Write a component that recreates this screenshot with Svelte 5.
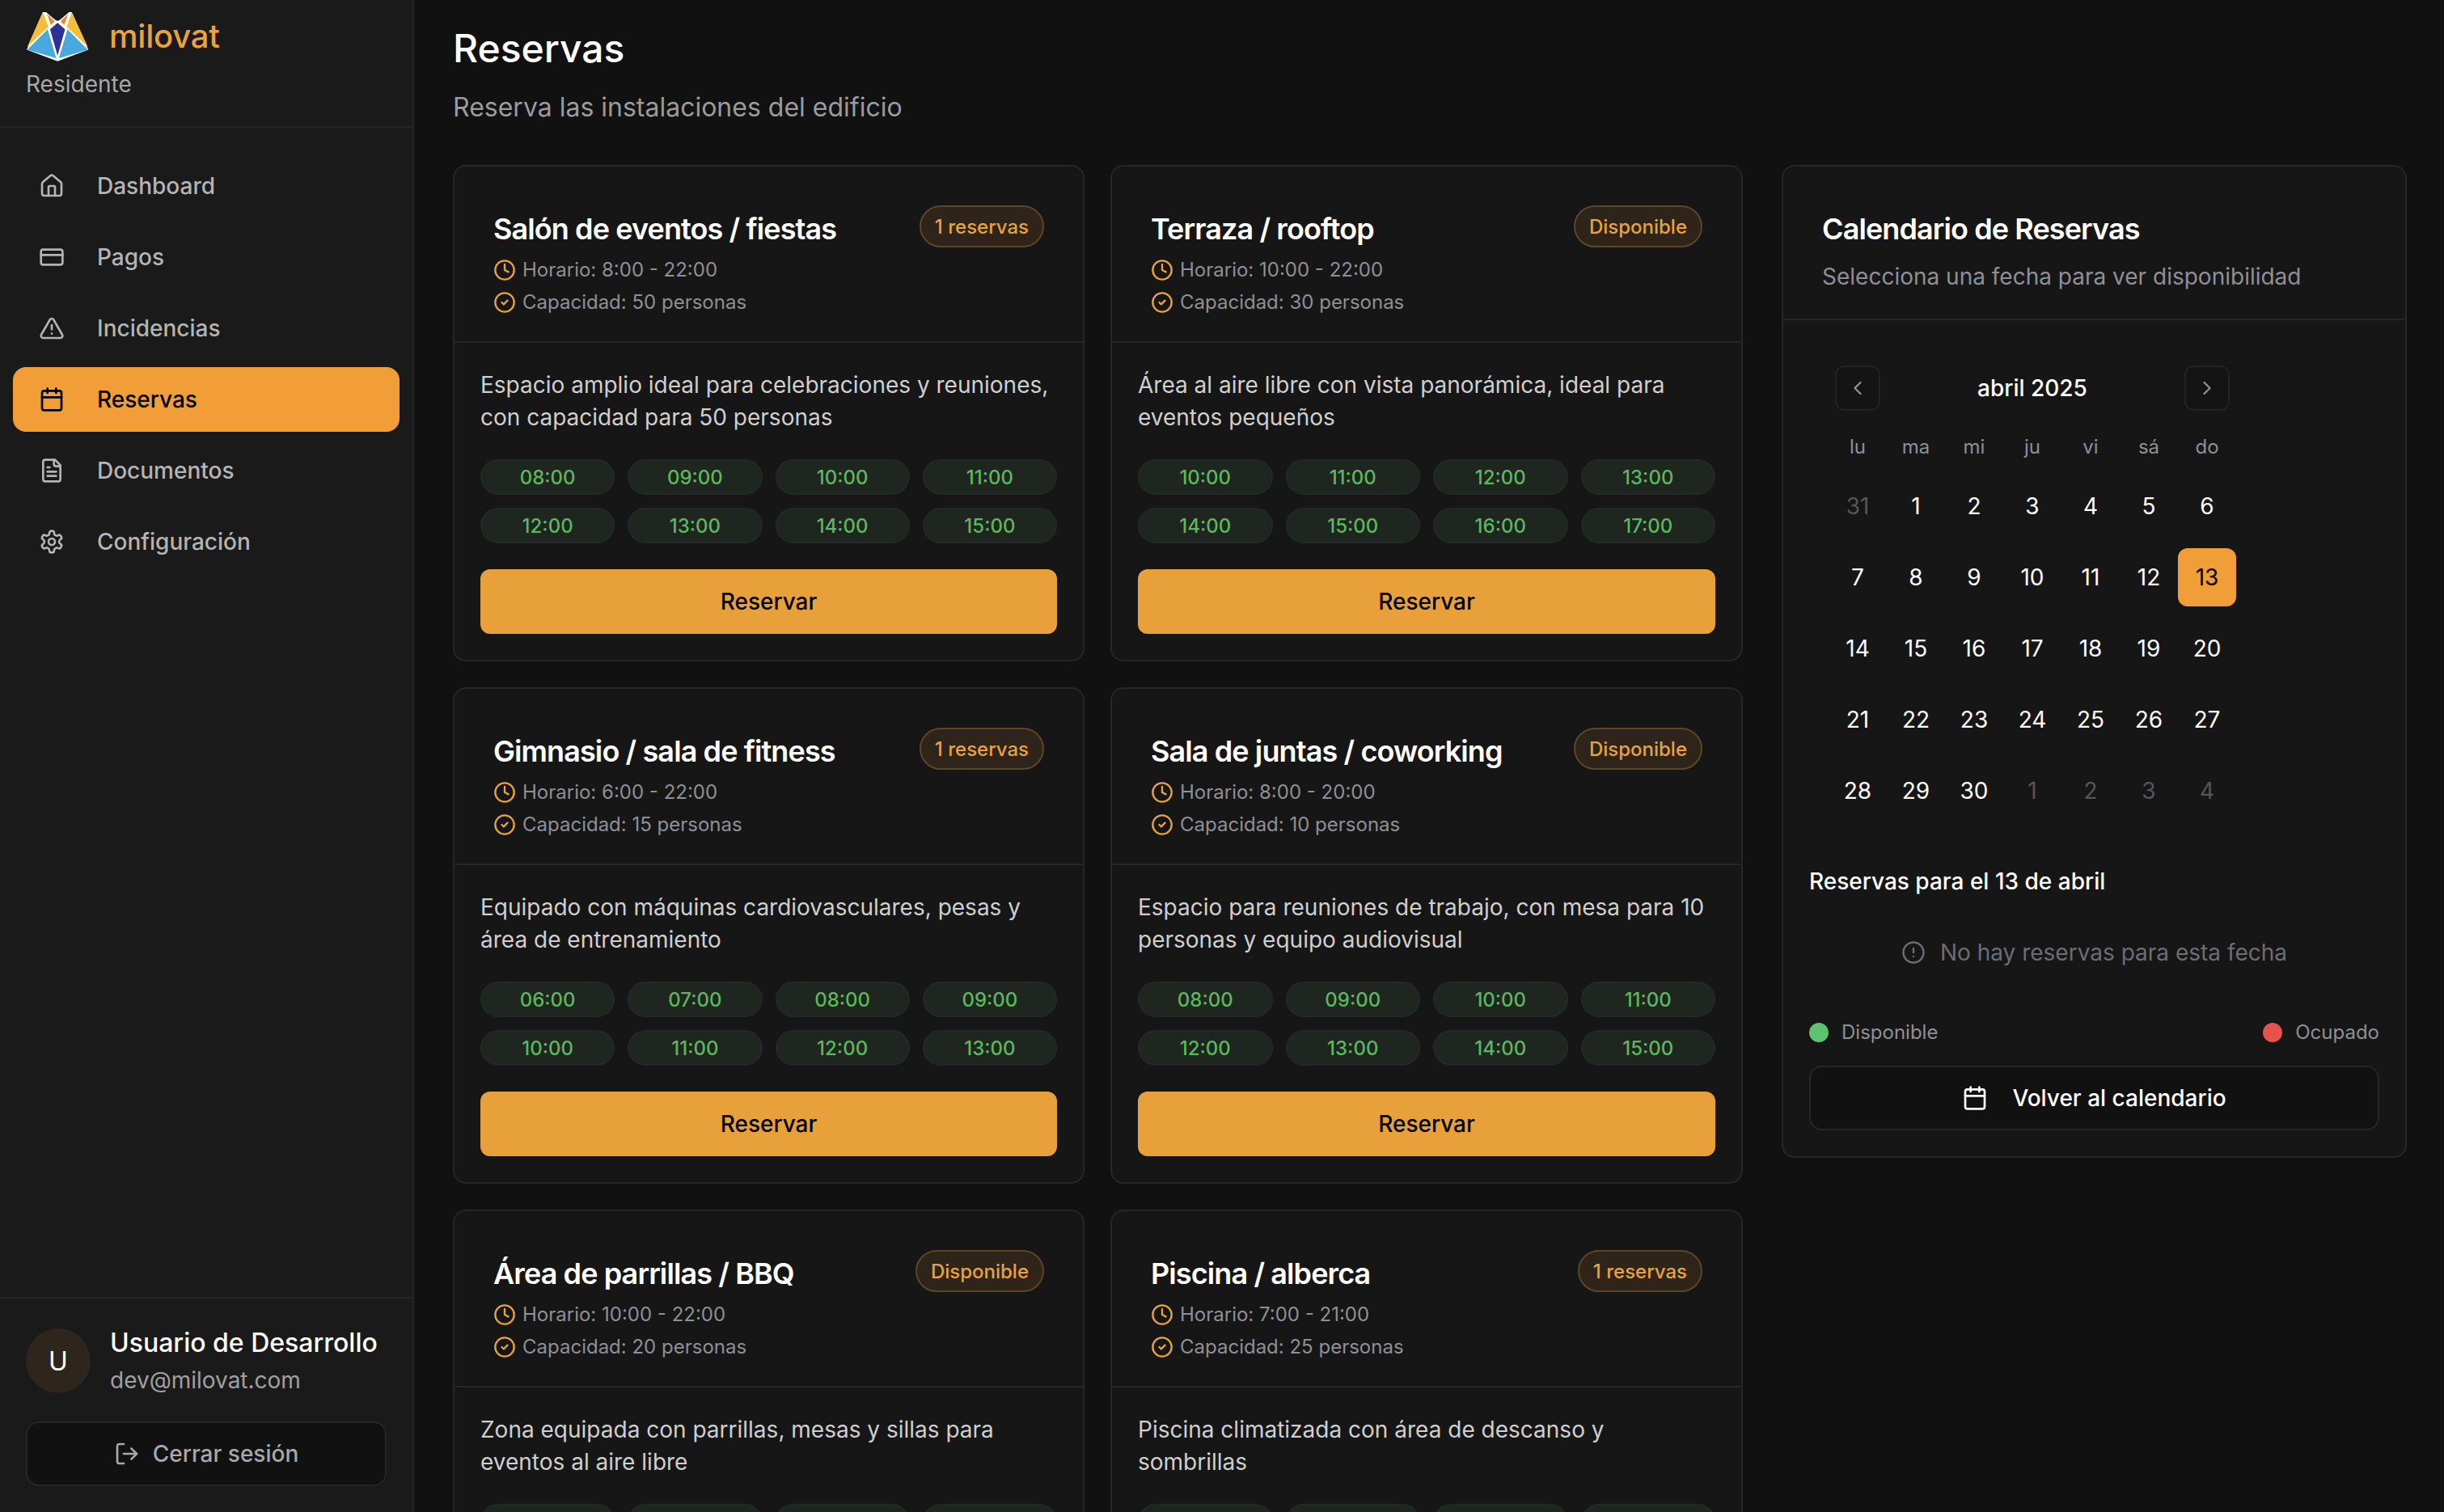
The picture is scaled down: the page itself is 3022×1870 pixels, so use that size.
<script lang="ts">
	const nav = [
		{ label: 'Dashboard', icon: 'home' },
		{ label: 'Pagos', icon: 'card' },
		{ label: 'Incidencias', icon: 'alert' },
		{ label: 'Reservas', icon: 'calendar', active: true },
		{ label: 'Documentos', icon: 'file' },
		{ label: 'Configuración', icon: 'gear' }
	];

	const hours = (from: number) =>
		Array.from({ length: 8 }, (_, i) => String(from + i).padStart(2, '0') + ':00');

	const spaces = [
		{
			name: 'Salón de eventos / fiestas',
			badge: '1 reservas',
			time: '8:00 - 22:00',
			cap: 50,
			desc: 'Espacio amplio ideal para celebraciones y reuniones, con capacidad para 50 personas',
			slots: hours(8)
		},
		{
			name: 'Terraza / rooftop',
			badge: 'Disponible',
			time: '10:00 - 22:00',
			cap: 30,
			desc: 'Área al aire libre con vista panorámica, ideal para eventos pequeños',
			slots: hours(10)
		},
		{
			name: 'Gimnasio / sala de fitness',
			badge: '1 reservas',
			time: '6:00 - 22:00',
			cap: 15,
			desc: 'Equipado con máquinas cardiovasculares, pesas y área de entrenamiento',
			slots: hours(6)
		},
		{
			name: 'Sala de juntas / coworking',
			badge: 'Disponible',
			time: '8:00 - 20:00',
			cap: 10,
			desc: 'Espacio para reuniones de trabajo, con mesa para 10 personas y equipo audiovisual',
			slots: hours(8)
		},
		{
			name: 'Área de parrillas / BBQ',
			badge: 'Disponible',
			time: '10:00 - 22:00',
			cap: 20,
			desc: 'Zona equipada con parrillas, mesas y sillas para eventos al aire libre',
			slots: hours(10)
		},
		{
			name: 'Piscina / alberca',
			badge: '1 reservas',
			time: '7:00 - 21:00',
			cap: 25,
			desc: 'Piscina climatizada con área de descanso y sombrillas',
			slots: hours(7)
		}
	];

	const weekdays = ['lu', 'ma', 'mi', 'ju', 'vi', 'sá', 'do'];
	const days = [
		{ n: 31, out: true },
		...Array.from({ length: 30 }, (_, i) => ({ n: i + 1, out: false })),
		...[1, 2, 3, 4].map((n) => ({ n, out: true }))
	];
</script>

{#snippet icon(name: string, size: number)}
	<svg
		width={size}
		height={size}
		viewBox="0 0 24 24"
		fill="none"
		stroke="currentColor"
		stroke-width="2"
		stroke-linecap="round"
		stroke-linejoin="round"
		aria-hidden="true"
	>
		{#if name === 'home'}
			<path d="M15 21v-8a1 1 0 0 0-1-1h-4a1 1 0 0 0-1 1v8" />
			<path d="M3 10a2 2 0 0 1 .709-1.528l7-5.999a2 2 0 0 1 2.582 0l7 5.999A2 2 0 0 1 21 10v9a2 2 0 0 1-2 2H5a2 2 0 0 1-2-2z" />
		{:else if name === 'card'}
			<rect x="2" y="5" width="20" height="14" rx="2" />
			<line x1="2" y1="10" x2="22" y2="10" />
		{:else if name === 'alert'}
			<path d="m21.73 18-8-14a2 2 0 0 0-3.48 0l-8 14A2 2 0 0 0 4 21h16a2 2 0 0 0 1.73-3" />
			<path d="M12 9v4" />
			<path d="M12 17h.01" />
		{:else if name === 'calendar'}
			<path d="M8 2v4" />
			<path d="M16 2v4" />
			<rect x="3" y="4" width="18" height="18" rx="2" />
			<path d="M3 10h18" />
		{:else if name === 'file'}
			<path d="M15 2H6a2 2 0 0 0-2 2v16a2 2 0 0 0 2 2h12a2 2 0 0 0 2-2V7Z" />
			<path d="M14 2v4a2 2 0 0 0 2 2h4" />
			<path d="M10 9H8" />
			<path d="M16 13H8" />
			<path d="M16 17H8" />
		{:else if name === 'gear'}
			<path d="M12.22 2h-.44a2 2 0 0 0-2 2v.18a2 2 0 0 1-1 1.73l-.43.25a2 2 0 0 1-2 0l-.15-.08a2 2 0 0 0-2.73.73l-.22.38a2 2 0 0 0 .73 2.73l.15.1a2 2 0 0 1 1 1.72v.51a2 2 0 0 1-1 1.74l-.15.09a2 2 0 0 0-.73 2.73l.22.38a2 2 0 0 0 2.73.73l.15-.08a2 2 0 0 1 2 0l.43.25a2 2 0 0 1 1 1.73V20a2 2 0 0 0 2 2h.44a2 2 0 0 0 2-2v-.18a2 2 0 0 1 1-1.73l.43-.25a2 2 0 0 1 2 0l.15.08a2 2 0 0 0 2.73-.73l.22-.39a2 2 0 0 0-.73-2.73l-.15-.08a2 2 0 0 1-1-1.74v-.5a2 2 0 0 1 1-1.74l.15-.09a2 2 0 0 0 .73-2.73l-.22-.38a2 2 0 0 0-2.73-.73l-.15.08a2 2 0 0 1-2 0l-.43-.25a2 2 0 0 1-1-1.73V4a2 2 0 0 0-2-2z" />
			<circle cx="12" cy="12" r="3" />
		{:else if name === 'logout'}
			<path d="M9 21H5a2 2 0 0 1-2-2V5a2 2 0 0 1 2-2h4" />
			<polyline points="16 17 21 12 16 7" />
			<line x1="21" y1="12" x2="9" y2="12" />
		{:else if name === 'clock'}
			<circle cx="12" cy="12" r="10" />
			<polyline points="12 6 12 12 16 14" />
		{:else if name === 'check'}
			<circle cx="12" cy="12" r="10" />
			<path d="m9 12 2 2 4-4" />
		{:else if name === 'info'}
			<circle cx="12" cy="12" r="10" />
			<line x1="12" y1="8" x2="12" y2="12" />
			<line x1="12" y1="16" x2="12.01" y2="16" />
		{:else if name === 'left'}
			<path d="m15 18-6-6 6-6" />
		{:else if name === 'right'}
			<path d="m9 18 6-6-6-6" />
		{/if}
	</svg>
{/snippet}

<div class="app">
	<aside class="sidebar">
		<div class="brand">
			<div class="brand-row">
				<svg class="logo" viewBox="100 42 232 184" width="77" height="61" aria-hidden="true">
					<polygon fill="#fff" points="160,42 172,42 205,70 215,75 225,70 258,42 268,42 330,182 215,225 100,182" />
					<polygon fill="#f6bd3c" points="160,42 181,96 102,172" />
					<polygon fill="#f6bd3c" points="268,42 249,96 328,172" />
					<polygon fill="#e98a2e" points="175,48 204,76 190,90" />
					<polygon fill="#e98a2e" points="255,48 226,76 240,90" />
					<polygon fill="#49a9dd" points="178,106 210,214 102,182" />
					<polygon fill="#49a9dd" points="252,106 220,214 328,182" />
					<polygon fill="#2e3192" points="215,82 243,106 215,204 187,106" />
				</svg>
				<span class="brand-name">milovat</span>
			</div>
			<p class="role">Residente</p>
		</div>

		<nav class="nav">
			{#each nav as item}
				<div class="nav-item" class:active={item.active}>
					{@render icon(item.icon, 32)}
					<span>{item.label}</span>
				</div>
			{/each}
		</nav>

		<div class="user-box">
			<div class="user">
				<div class="avatar">U</div>
				<div>
					<p class="user-name">Usuario de Desarrollo</p>
					<p class="user-mail">dev@milovat.com</p>
				</div>
			</div>
			<button class="logout">
				{@render icon('logout', 32)}
				<span>Cerrar sesión</span>
			</button>
		</div>
	</aside>

	<main class="main">
		<h1>Reservas</h1>
		<p class="subtitle">Reserva las instalaciones del edificio</p>

		<div class="layout">
			<div class="spaces">
				{#each spaces as s}
					<section class="card">
						<header class="card-head">
							<div>
								<h2>{s.name}</h2>
								<p class="meta">{@render icon('clock', 28)} Horario: {s.time}</p>
								<p class="meta">{@render icon('check', 28)} Capacidad: {s.cap} personas</p>
							</div>
							<span class="badge">{s.badge}</span>
						</header>
						<div class="card-body">
							<p class="desc">{s.desc}</p>
							<div class="slots">
								{#each s.slots as slot}
									<span class="slot">{slot}</span>
								{/each}
							</div>
							<button class="reserve">Reservar</button>
						</div>
					</section>
				{/each}
			</div>

			<section class="card calendar-card">
				<header class="cal-head">
					<h2>Calendario de Reservas</h2>
					<p>Selecciona una fecha para ver disponibilidad</p>
				</header>
				<div class="cal-body">
					<div class="calendar">
						<div class="month">
							<button class="month-btn" aria-label="Mes anterior">{@render icon('left', 28)}</button>
							<span>abril 2025</span>
							<button class="month-btn" aria-label="Mes siguiente">{@render icon('right', 28)}</button>
						</div>
						<div class="weekdays">
							{#each weekdays as d}
								<span>{d}</span>
							{/each}
						</div>
						<div class="days">
							{#each days as d}
								<span class="day" class:out={d.out} class:selected={!d.out && d.n === 13}>{d.n}</span>
							{/each}
						</div>
					</div>

					<h3>Reservas para el 13 de abril</h3>
					<p class="empty">{@render icon('info', 30)} No hay reservas para esta fecha</p>

					<div class="legend">
						<span class="legend-item"><i class="dot green"></i>Disponible</span>
						<span class="legend-item"><i class="dot red"></i>Ocupado</span>
					</div>
					<button class="back">
						{@render icon('calendar', 32)}
						<span>Volver al calendario</span>
					</button>
				</div>
			</section>
		</div>
	</main>
</div>

<style>
	:global(body) {
		margin: 0;
		background: #111;
	}

	.app {
		display: flex;
		height: 100vh;
		overflow: hidden;
		font-family: Inter, 'Liberation Sans', sans-serif;
		color: #fff;
	}

	p,
	h1,
	h2,
	h3 {
		margin: 0;
	}

	button {
		font-family: inherit;
		cursor: pointer;
	}

	.sidebar {
		width: 512px;
		flex: none;
		display: flex;
		flex-direction: column;
		background: #1a1a1a;
		border-right: 2px solid #252525;
		box-sizing: border-box;
	}

	.brand {
		padding: 14px 32px 32px;
		border-bottom: 2px solid #252525;
	}

	.brand-row {
		display: flex;
		align-items: center;
		gap: 25px;
		height: 62px;
	}

	.logo {
		margin-left: 1px;
		flex: none;
	}

	.brand-name {
		margin-top: -2px;
		font-size: 40px;
		font-weight: 500;
		letter-spacing: -0.2px;
		color: #e8a33d;
	}

	.role {
		margin-top: 8px;
		font-size: 28px;
		line-height: 40px;
		color: #a8a8a8;
	}

	.nav {
		display: flex;
		flex-direction: column;
		gap: 8px;
		padding: 32px 16px;
	}

	.nav-item {
		display: flex;
		align-items: center;
		gap: 40px;
		height: 80px;
		padding: 0 32px;
		border-radius: 16px;
		font-size: 28px;
		font-weight: 500;
		color: #b4b4b4;
	}

	.nav-item.active {
		background: #f29e38;
		color: #000;
	}

	.user-box {
		margin-top: auto;
		padding: 33px 32px 32px;
		border-top: 2px solid #252525;
	}

	.user {
		display: flex;
		align-items: center;
		gap: 24px;
	}

	.avatar {
		width: 80px;
		height: 80px;
		flex: none;
		display: flex;
		align-items: center;
		justify-content: center;
		border-radius: 50%;
		background: #2e261d;
		font-size: 32px;
	}

	.user-name {
		font-size: 32px;
		line-height: 44px;
		font-weight: 500;
	}

	.user-mail {
		margin-top: 4px;
		font-size: 28px;
		line-height: 40px;
		color: #a0a0a0;
	}

	.logout {
		display: flex;
		align-items: center;
		justify-content: center;
		gap: 16px;
		width: 100%;
		height: 80px;
		margin-top: 31px;
		background: #111;
		border: 2px solid #262626;
		border-radius: 16px;
		font-size: 28px;
		font-weight: 500;
		color: #a8a8a8;
	}

	.main {
		flex: 1;
		min-width: 0;
		padding: 24px 46px 48px 48px;
		overflow: hidden;
		background: #111;
	}

	h1 {
		font-size: 48px;
		line-height: 72px;
		font-weight: 500;
	}

	.subtitle {
		margin-top: 13px;
		margin-bottom: 47px;
		font-size: 32px;
		line-height: 48px;
		color: #9a9a9f;
	}

	.layout {
		display: grid;
		grid-template-columns: 1fr 773px;
		gap: 48px;
		align-items: start;
	}

	.spaces {
		display: grid;
		grid-template-columns: 781fr 782fr;
		gap: 32px;
	}

	.card {
		background: #161616;
		border: 2px solid #262626;
		border-radius: 16px;
		min-width: 0;
	}

	.card-head {
		display: flex;
		justify-content: space-between;
		align-items: flex-start;
		padding: 48px 48px 28px;
		border-bottom: 2px solid #262626;
	}

	h2 {
		font-size: 36px;
		line-height: 58px;
		font-weight: 600;
		letter-spacing: -0.9px;
	}

	.card-head h2 {
		margin-bottom: 2px;
	}

	.meta {
		display: flex;
		align-items: center;
		gap: 8px;
		font-size: 24px;
		line-height: 40px;
		color: #8f8f96;
	}

	.meta svg {
		color: #e8a33d;
	}

	.badge {
		flex: none;
		padding: 0 17px;
		height: 48px;
		display: flex;
		align-items: center;
		border: 2px solid #5e4526;
		border-radius: 26px;
		background: #2e241a;
		font-size: 24px;
		font-weight: 500;
		color: #e8a33d;
	}

	.card-body {
		padding: 32px;
	}

	.desc {
		font-size: 28px;
		line-height: 40px;
		color: #cfcfcf;
	}

	.slots {
		display: grid;
		grid-template-columns: repeat(4, 1fr);
		gap: 16px;
		margin-top: 32px;
	}

	.slot {
		display: flex;
		align-items: center;
		justify-content: center;
		height: 40px;
		border: 2px solid #24282a;
		border-radius: 22px;
		background: #1e261f;
		font-size: 24px;
		font-weight: 500;
		color: #5cb85c;
	}

	.reserve {
		width: 100%;
		height: 80px;
		margin-top: 32px;
		border: 0;
		border-radius: 12px;
		background: #e8a03a;
		font-size: 28px;
		font-weight: 500;
		color: #000;
	}

	.cal-head {
		padding: 48px 48px 32px;
		border-bottom: 2px solid #262626;
	}

	.cal-head p {
		margin-top: 10px;
		font-size: 28px;
		line-height: 40px;
		color: #8f8f96;
	}

	.cal-body {
		padding: 32px;
	}

	.calendar {
		width: 504px;
		padding: 24px;
	}

	.month {
		display: flex;
		align-items: center;
		justify-content: space-between;
		padding: 0 8px;
		font-size: 28px;
		font-weight: 500;
	}

	.month-btn {
		display: flex;
		align-items: center;
		justify-content: center;
		width: 56px;
		height: 56px;
		padding: 0;
		background: #141414;
		border: 2px solid #222;
		border-radius: 12px;
		color: #8f8f96;
	}

	.weekdays,
	.days {
		display: grid;
		grid-template-columns: repeat(7, 72px);
		text-align: center;
	}

	.weekdays {
		margin: 25px 0 17px;
		font-size: 24px;
		line-height: 40px;
		color: #8f8f96;
	}

	.days {
		grid-auto-rows: 72px;
		row-gap: 16px;
		font-size: 28px;
	}

	.day {
		display: flex;
		align-items: center;
		justify-content: center;
		border-radius: 12px;
	}

	.day.out {
		color: #55555a;
	}

	.day.selected {
		background: #f29e38;
		color: #000;
	}

	h3 {
		margin-top: 32px;
		font-size: 28px;
		line-height: 40px;
		font-weight: 500;
	}

	.empty {
		display: flex;
		align-items: center;
		justify-content: center;
		gap: 18px;
		padding: 48px 0;
		font-size: 28px;
		line-height: 40px;
		color: #6c6c74;
	}

	.legend {
		display: flex;
		justify-content: space-between;
		margin-top: 15px;
		font-size: 24px;
		line-height: 32px;
		color: #8f8f96;
	}

	.legend-item {
		display: flex;
		align-items: center;
		gap: 16px;
	}

	.dot {
		width: 24px;
		height: 24px;
		border-radius: 50%;
	}

	.green {
		background: #5cc46e;
	}

	.red {
		background: #e5534b;
	}

	.back {
		display: flex;
		align-items: center;
		justify-content: center;
		gap: 30px;
		width: 100%;
		height: 80px;
		margin-top: 25px;
		background: #111;
		border: 2px solid #262626;
		border-radius: 16px;
		font-size: 28px;
		font-weight: 500;
		color: #fff;
	}
</style>
